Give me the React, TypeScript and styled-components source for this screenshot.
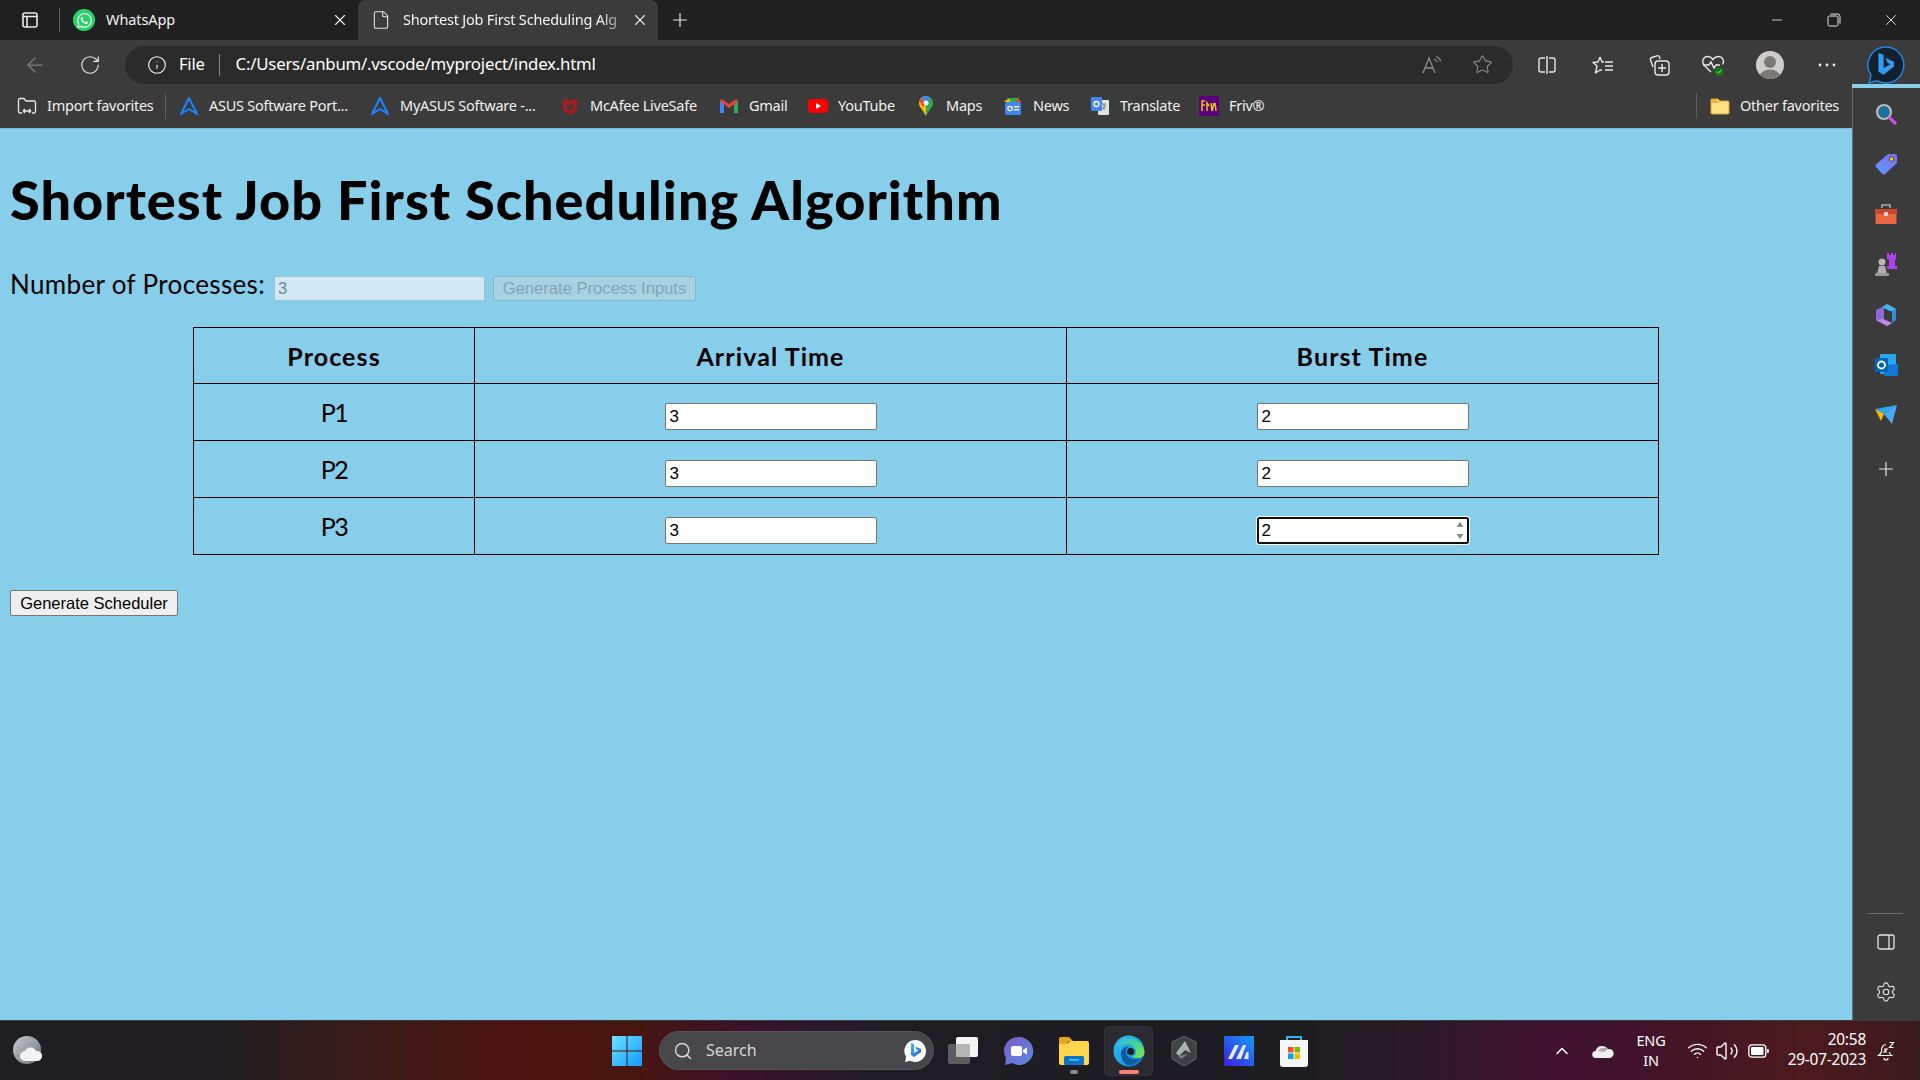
import React from "react";
import styled, { createGlobalStyle } from "styled-components";
import { ArrowLeft, RotateCw, Info, Star, Plus, X, Minus, File, Search, Settings, ChevronUp, Wifi, Volume2 } from "lucide-react";
import { FaWhatsapp } from "react-icons/fa";

const Global = createGlobalStyle`
  html, body { margin: 0; padding: 0; background: #87ceeb; }
  body { font-family: "Noto Sans", sans-serif; }
`;

const Screen = styled.div`
  width: 1920px; height: 1080px; display: flex; flex-direction: column; overflow: hidden;
`;

const TitleBar = styled.div`
  height: 40px; flex: none; background: #202020; display: flex; align-items: center; color: #fff; font-size: 14px;
`;
const IconSlot = styled.span<{ $w?: number; $ml?: number; $c?: string }>`
  flex: none; display: flex; align-items: center; justify-content: center;
  width: ${(p) => p.$w ?? 40}px; margin-left: ${(p) => p.$ml ?? 0}px; color: ${(p) => p.$c ?? "#e8e8e8"};
`;
const TabDivider = styled.span`
  width: 1px; height: 24px; background: #5c5c5c; flex: none;
`;
const Tab = styled.div<{ $active?: boolean; $w: number }>`
  width: ${(p) => p.$w}px; height: 40px; flex: none; display: flex; align-items: center; box-sizing: border-box;
  background: ${(p) => (p.$active ? "#3b3b3b" : "transparent")};
  border-radius: 8px 8px 0 0;
`;
const TabLabel = styled.span<{ $fade?: boolean; $ml?: number }>`
  flex: 1; white-space: nowrap; font-size: 14.5px; letter-spacing: ${(p) => (p.$fade ? -0.2 : -0.1)}px; color: #f4f4f4; padding-bottom: 2px;
  margin-left: ${(p) => p.$ml ?? 0}px;
  ${(p) => p.$fade && "-webkit-mask-image: linear-gradient(90deg, #000 90%, rgba(0,0,0,.35) 100%);"}
`;
const FaviconCircle = styled.span`
  width: 22px; height: 22px; border-radius: 50%; background: #25d366; color: #fff;
  display: flex; align-items: center; justify-content: center; flex: none;
`;
const WindowControls = styled.div`
  margin-left: auto; display: flex; padding-right: 1px;
`;

const Toolbar = styled.div`
  height: 44px; flex: none; background: #3b3b3b; display: flex; align-items: center; padding: 5px 0 0 7px; box-sizing: border-box;
`;
const Address = styled.div`
  width: 1388px; height: 38px; margin: 0 0 0 8px; flex: none; border-radius: 19px; background: #2b2b2b;
  display: flex; align-items: center; color: #fff; padding-left: 22px; box-sizing: border-box;
`;
const AddrSep = styled.span`
  width: 1px; height: 22px; background: #8a8a8a; margin: 0 16px 0 14px;
`;
const UrlText = styled.span`
  letter-spacing: -0.22px; font-size: 16.8px; padding-bottom: 2px;
`;
const FileText = styled.span`
  font-size: 16.5px; margin-left: 12px; letter-spacing: -0.2px; padding-bottom: 2px;
`;
const AddrEnd = styled.div`
  margin-left: auto; display: flex; align-items: center; padding-right: 6px;
`;
const Avatar = styled.span`
  width: 28px; height: 28px; border-radius: 50%; background: #cfcdca; overflow: hidden; display: block;
`;

const Body = styled.div`
  flex: 1; min-height: 0; display: flex;
`;
const Left = styled.div`
  flex: 1; min-width: 0; display: flex; flex-direction: column;
`;
const Bookmarks = styled.div`
  height: 45px; flex: none; box-sizing: border-box; background: #3b3b3b; display: flex; align-items: center;
  padding-left: 17px; color: #f0f0f0; border-bottom: 1px solid #7fb9d3; font-size: 14.5px;
`;
const Bookmark = styled.div<{ $lw: number; $ml?: number }>`
  display: flex; align-items: center; flex: none; margin-left: ${(p) => p.$ml ?? 21}px;
  span.t { width: ${(p) => p.$lw - 1}px; margin-left: 10px; white-space: nowrap; letter-spacing: -0.25px; padding-bottom: 2px; }
`;
const BmIcon = styled.span`
  width: 20px; height: 20px; display: flex; align-items: center; justify-content: center; flex: none;
`;
const BmDivider = styled.span<{ $ml?: string }>`
  width: 1px; height: 26px; background: #5e5e5e; flex: none; margin-left: ${(p) => p.$ml ?? "13px"};
`;
const BmRight = styled.div`
  margin-left: auto; display: flex; align-items: center; padding-right: 15px;
`;

const Page = styled.main`
  flex: 1; min-height: 0; background: #87ceeb; padding: 0 10px; box-sizing: border-box; color: #000;
`;
const Heading = styled.h1`
  font-family: "Lato", sans-serif;
  margin: 39px 0 0; font-size: 54px; line-height: 64px; font-weight: 900; letter-spacing: 1.03px; white-space: nowrap;
`;
const ProcessRow = styled.div`
  display: flex; align-items: center; height: 27px; margin-top: 43px;
`;
const CountLabel = styled.label`
  font-family: "Lato", sans-serif;
  font-size: 26px; width: 264px; white-space: nowrap; letter-spacing: 0.35px; position: relative; top: -5px; flex: none;
`;
const CountInput = styled.input`
  width: 211px; height: 25px; box-sizing: border-box; border: 1px solid #9fbfcd; border-radius: 2px; background: #d2e9f3;
  color: #6f8c98; font: 16.6px "Liberation Sans", sans-serif; padding: 0 3px; margin: 0 8px 0 0;
`;
const GhostButton = styled.button`
  width: 203px; height: 25px; box-sizing: border-box; border: 1px solid #8ab5c7; border-radius: 2px; background: #a7d2e3;
  color: #84a6b4; font: 16.6px "Liberation Sans", sans-serif; padding: 0; white-space: nowrap;
`;
const Table = styled.table`
  width: 1465px; margin: 25px auto 0; border-collapse: collapse; table-layout: fixed;
  font-family: "Lato", sans-serif;
  th, td { border: 1px solid #000; padding: 0; text-align: center; height: 56px; }
  th { font-size: 25px; font-weight: 700; letter-spacing: 1.1px; padding-top: 1px; box-sizing: border-box; }
  td { font-size: 25px; letter-spacing: -1.4px; }
`;
const Col = styled.col<{ $w: number }>`
  width: ${(p) => p.$w}px;
`;
const InputCell = styled.div`
  display: flex; justify-content: center; padding-top: 9px; letter-spacing: 0;
`;
const NumberBox = styled.div`
  position: relative; width: 212px; height: 27px;
`;
const TimeInput = styled.input<{ $focus?: boolean }>`
  display: block; width: 212px; height: 27px; box-sizing: border-box; margin: 0;
  background: #fff; color: #000; font: 17px "Liberation Sans", sans-serif; padding: 0 4px; border-radius: 2px;
  border: ${(p) => (p.$focus ? "2px solid #101010" : "1px solid #767676")};
  padding-left: ${(p) => (p.$focus ? "3px" : "4px")};
  outline: ${(p) => (p.$focus ? "1px solid #fff" : "none")};
`;
const Spinner = styled.svg`
  position: absolute; right: 5px; top: 4px;
`;
const Submit = styled.button`
  display: block; margin: 35px 0 0; width: 168px; height: 26px; box-sizing: border-box; border: 1px solid #767676; border-radius: 2px;
  background: #efefef; color: #000; font: 16.5px "Liberation Sans", sans-serif; padding: 0; white-space: nowrap;
`;

const Sidebar = styled.aside`
  width: 68px; flex: none; background: #3b3b3b; display: flex; flex-direction: column; align-items: center;
  box-sizing: border-box; border-left: 1px solid #6b6b6b; margin-top: 4px; padding: 1px 2px 0 0;
`;
const SideIcon = styled.span<{ $c?: string; $mt?: number }>`
  height: 50.2px; flex: none; display: flex; align-items: center; justify-content: center; width: 100%;
  color: ${(p) => p.$c ?? "inherit"}; margin-top: ${(p) => p.$mt ?? 0}px;
`;
const SideRule = styled.span`
  width: 35px; height: 1px; background: #6e6e6e; margin-top: auto; margin-bottom: 3px;
`;
const SideBottomIcon = styled.span`
  height: 50px; flex: none; display: flex; align-items: center; justify-content: center; color: #e4e4e4;
  &:last-child { margin-bottom: 3px; }
`;

const Taskbar = styled.footer`
  height: 60px; flex: none; display: flex; align-items: center; box-sizing: border-box; padding: 0 14px 0 13px;
  border-top: 1px solid #3a3a3e; color: #fff;
  background: linear-gradient(90deg, #1f1e23 0%, #201e22 11%, #3d1b18 20%, #4c1412 26%, #48150f 33%, #3d1228 38%, #1f1c24 46%, #1d1c21 68%, #2c1a26 74%, #411230 81%, #41122a 85%, #4d1a1c 94%, #3a1a1e 100%);
`;
const StartSlot = styled.span`
  margin-left: 569px; width: 30px; height: 30px; flex: none; display: block;
`;
const SearchPill = styled.div`
  width: 275px; height: 39px; margin: 0 2px 0 17px; flex: none; border-radius: 20px; background: #47464b;
  border: 1px solid #56555a; box-sizing: border-box; display: flex; align-items: center; padding-left: 13px; font-size: 16px; color: #d6d6d6;
`;
const PillText = styled.span`
  margin-left: 13px; flex: 1; padding-bottom: 1px;
`;
const TaskSlot = styled.span<{ $active?: boolean }>`
  width: ${(p) => (p.$active ? 49 : 55)}px; height: 50px; margin: 0 ${(p) => (p.$active ? 3 : 0)}px; flex: none; position: relative;
  display: flex; align-items: center; justify-content: center; border-radius: 5px; box-sizing: border-box;
  ${(p) => p.$active && "background: #2b2a30; border: 1px solid #34333a;"}
`;
const RunningDot = styled.span<{ $active?: boolean }>`
  position: absolute; bottom: ${(p) => (p.$active ? 1 : 2)}px; left: 50%; transform: translateX(-50%);
  width: ${(p) => (p.$active ? 20 : 8)}px; height: 4px; border-radius: 2px;
  background: ${(p) => (p.$active ? "#f98370" : "#8b8b8b")};
`;
const Tray = styled.div`
  margin-left: auto; display: flex; align-items: center;
`;
const TraySlot = styled.span<{ $w: number }>`
  width: ${(p) => p.$w}px; flex: none; display: flex; align-items: center; justify-content: center;
  svg { flex: none; }
`;
const LangText = styled.span`
  width: 48px; text-align: center; font-size: 14.5px; line-height: 20px; flex: none; letter-spacing: -0.2px; padding-bottom: 2px;
`;
const Clock = styled.span`
  width: 85px; flex: none; text-align: right; font-size: 15.4px; line-height: 20px; white-space: nowrap; letter-spacing: -0.2px; padding-bottom: 2px;
`;

const s = { strokeWidth: 1.25 };

const PanelIcon = () => (
  <svg width="18" height="18" viewBox="0 0 18 18" fill="none" stroke="currentColor" strokeWidth="1.6">
    <rect x="2" y="2" width="14" height="14" rx="2" /><path d="M2 5.5h14M6 5.5V16" />
  </svg>
);
const RestoreIcon = () => (
  <svg width="14" height="14" viewBox="0 0 14 14" fill="none" stroke="currentColor" strokeWidth="1">
    <rect x="1" y="3" width="10" height="10" rx="1.5" /><path d="M3.5 1h7a2.5 2.5 0 0 1 2.5 2.5v7" />
  </svg>
);
const ReadIcon = () => (
  <svg width="22" height="20" viewBox="0 0 22 20" fill="none" stroke="#8c8c8c" strokeWidth="1.3">
    <path d="M2 18 8 3l6 15M4.5 13h7" /><path d="M13 4c1.5.5 2.5 1.5 3 3M15 1.5c2.5.8 4 2.500 4.800 5" />
  </svg>
);
const SplitIcon = () => (
  <svg width="20" height="20" viewBox="0 0 20 20" fill="none" stroke="#e8e8e8" strokeWidth="1.4">
    <path d="M8 3H4a2 2 0 0 0-2 2v10a2 2 0 0 0 2 2h4M12 3h4a2 2 0 0 1 2 2v10a2 2 0 0 1-2 2h-4M10 1v18" />
  </svg>
);
const FavsIcon = () => (
  <svg width="22" height="20" viewBox="0 0 22 20" fill="none" stroke="#e8e8e8" strokeWidth="1.4" strokeLinejoin="round">
    <path d="M8 2l2 5h2M8 2 6 7 1 7.500l4 3.500-1.500 7L8 15h2" /><path d="M13 7h8M13 11h8M13 15h8" />
  </svg>
);
const CollectionsIcon = () => (
  <svg width="22" height="22" viewBox="0 0 22 22" fill="none" stroke="#e8e8e8" strokeWidth="1.4">
    <path d="M5 13 2.500 6a2 2 0 0 1 1.300-2.500L9 1.800a2 2 0 0 1 2.500 1.200L12 5" />
    <rect x="7" y="7" width="14" height="14" rx="3" /><path d="M14 10v8M10 14h8" />
  </svg>
);
const HealthIcon = () => (
  <svg width="24" height="24" viewBox="0 0 24 24" fill="none">
    <path d="M10 19 3 12c-3-4 0-9 4-8.500 2.500.2 4 1.500 5 3 1-1.500 2.500-2.800 5-3 4-.5 7 4 4.500 8" stroke="#e8e8e8" strokeWidth="1.4" />
    <path d="M2 12h6l2-3 3 6 2-3h4" stroke="#e8e8e8" strokeWidth="1.4" />
    <circle cx="18" cy="18.500" r="4.500" fill="#107c10" /><path d="M16 18.500l1.500 1.500 2.500-3" stroke="#9fd49f" strokeWidth="1" />
  </svg>
);
const AvatarFace = () => (
  <svg width="28" height="28" viewBox="0 0 28 28">
    <circle cx="14" cy="11" r="6" fill="#7b7976" /><ellipse cx="14" cy="25" rx="10" ry="6.500" fill="#7b7976" />
  </svg>
);
const Dots = () => (
  <svg width="18" height="4" viewBox="0 0 18 4" fill="#e8e8e8"><circle cx="2" cy="2" r="1.400" /><circle cx="9" cy="2" r="1.400" /><circle cx="16" cy="2" r="1.400" /></svg>
);
const BingB = ({ size = 24 }: { size?: number }) => (
  <svg width={size} height={size} viewBox="0 0 24 24">
    <defs><linearGradient id="bb" x1="0" y1="0" x2="1" y2="1"><stop offset="0" stopColor="#37bdff" /><stop offset=".5" stopColor="#2a8cf0" /><stop offset="1" stopColor="#1b5fd8" /></linearGradient></defs>
    <path d="M12 1a11 11 0 1 1-5 20.800L2 23l1.200-5A11 11 0 0 1 12 1z" fill="#fff" />
    <path d="M8 4l3 1v9l4.500-2.500-2-1-1.200-3L18 10v3l-7 5-3-2z" fill="url(#bb)" />
  </svg>
);
const BingBubble = () => (
  <svg width="40" height="40" viewBox="0 0 40 40" fill="none">
    <path d="M20 2a18 18 0 1 1-9 33.700L3 38l2-8A18 18 0 0 1 20 2z" fill="#14202e" stroke="#1e88e5" strokeWidth="1.500" />
    <g transform="translate(9 8) scale(1.150)">
      <path d="M3 0l4.500 1.500v11.500l6-3.300-2.700-1.300-1.600-4L16.500 7.500v4.300L7.500 19 3 16.200z" fill="#2f9ff5" />
    </g>
  </svg>
);
const ImportIcon = () => (
  <svg width="20" height="20" viewBox="0 0 20 20" fill="none" stroke="#e8e8e8" strokeWidth="1.3">
    <path d="M5 17H3a1.500 1.500 0 0 1-1.500-1.500V4A1.500 1.500 0 0 1 3 2.500h4L9 5h8a1.500 1.500 0 0 1 1.500 1.500v9A1.500 1.500 0 0 1 17 17h-2" /><path d="M6 15h8M6 15l2-2M6 15l2 2M14 15l-2-2M14 15l-2 2" />
  </svg>
);
const AsusIcon = () => (
  <svg width="20" height="20" viewBox="0 0 20 20" fill="none" stroke="#1a85ff" strokeWidth="2" strokeLinejoin="round">
    <path d="M10 2 2 18l8-5 8 5z" />
  </svg>
);
const McAfee = () => (
  <svg width="20" height="20" viewBox="0 0 20 20"><path d="M3 2l7 3 7-3v10c0 3-4 5.500-7 7-3-1.500-7-4-7-7z" fill="#a31d22" /><path d="M7 7.500l3 2 3-2v5l-3 2-3-2z" fill="#3b3b3b" /></svg>
);
const Gmail = () => (
  <svg width="20" height="18" viewBox="0 0 20 18">
    <path d="M1 4v12h4V7z" fill="#4285f4" /><path d="M15 7v9h4V4z" fill="#34a853" />
    <path d="M1 4l9 7 9-7-1.500-2L10 7 2.500 2z" fill="#ea4335" />
  </svg>
);
const YouTube = () => (
  <svg width="20" height="16" viewBox="0 0 20 16"><rect x="0" y="1" width="20" height="14" rx="4" fill="#f00" /><path d="M8 5l5 3-5 3z" fill="#fff" /></svg>
);
const Maps = () => (
  <svg width="16" height="20" viewBox="0 0 16 20">
    <path d="M8 0a7 7 0 0 0-7 7c0 4 4 7 7 13z" fill="#fbbc04" /><path d="M8 0a7 7 0 0 1 7 7c0 4-4 7-7 13z" fill="#34a853" />
    <path d="M3 2a7 7 0 0 1 9-.5L8 7z" fill="#4285f4" /><path d="M1.500 5 3 2l5 5-3 4z" fill="#ea4335" /><circle cx="8" cy="7" r="2.500" fill="#fff" />
  </svg>
);
const News = () => (
  <svg width="20" height="20" viewBox="0 0 20 20">
    <path d="M4 2h12v5H4z" fill="#34a853" /><path d="M1 5l6-2v6z" fill="#fbbc04" /><path d="M19 5l-6-2v6z" fill="#ea4335" />
    <rect x="2" y="6" width="16" height="13" rx="1.500" fill="#4285f4" /><rect x="11" y="10" width="5" height="1.400" fill="#fff" /><rect x="11" y="13" width="5" height="1.400" fill="#fff" />
    <circle cx="7" cy="12.500" r="2.200" fill="none" stroke="#fff" strokeWidth="1.200" />
  </svg>
);
const Translate = () => (
  <svg width="20" height="20" viewBox="0 0 20 20">
    <rect x="8" y="4" width="11" height="15" rx="1" fill="#dfe3e8" /><path d="M12 8h4M14 8v6M12 13l4-3" stroke="#777" strokeWidth="1" fill="none" />
    <rect x="1" y="1" width="11" height="14" rx="1" fill="#4285f4" /><circle cx="6.500" cy="8" r="2.500" fill="none" stroke="#fff" strokeWidth="1.300" />
  </svg>
);
const Friv = () => (
  <svg width="20" height="20" viewBox="0 0 20 20">
    <rect width="20" height="20" fill="#5a007a" />
    <path d="M3 15V5h3M3 9h3M8 15V7l2 3M12 7l1 8 2-8M16 7l1 8" stroke="#e8c810" strokeWidth="1.500" fill="none" />
  </svg>
);
const FolderIcon = () => (
  <svg width="20" height="18" viewBox="0 0 20 18">
    <path d="M1 3a1 1 0 0 1 1-1h6l2 2h8a1 1 0 0 1 1 1v11a1 1 0 0 1-1 1H2a1 1 0 0 1-1-1z" fill="#ffdf80" stroke="#d8a530" strokeWidth="1" />
    <path d="M1 6h7l2-2H8L7 2H2a1 1 0 0 0-1 1z" fill="#eeb83e" />
  </svg>
);

const SideSearch = () => (
  <svg width="24" height="24" viewBox="0 0 24 24" fill="none">
    <circle cx="10" cy="10" r="7" fill="#1f6f9f" stroke="#b8b8b8" strokeWidth="2.200" />
    <path d="M16 16l5 5" stroke="#c94fe0" strokeWidth="3.400" strokeLinecap="round" />
  </svg>
);
const SideTag = () => (
  <svg width="24" height="24" viewBox="0 0 24 24">
    <defs><linearGradient id="tg" x1="0" y1="1" x2="1" y2="0"><stop offset="0" stopColor="#5f9bff" /><stop offset="1" stopColor="#7a6cf0" /></linearGradient></defs>
    <path d="M14 2h7a2 2 0 0 1 2 2v7L11 22a2 2 0 0 1-2.500 0L2 15a2 2 0 0 1 0-2.500z" fill="url(#tg)" />
    <circle cx="17.500" cy="7" r="2.200" fill="#ffd400" stroke="#333" strokeWidth=".8" />
  </svg>
);
const SideBox = () => (
  <svg width="24" height="24" viewBox="0 0 24 24">
    <path d="M8 6V3h8v3" fill="none" stroke="#aaa" strokeWidth="1.600" />
    <path d="M1 7h22v5H1z" fill="#c9472c" /><path d="M1.500 12h21v9a1 1 0 0 1-1 1h-19a1 1 0 0 1-1-1z" fill="#e9673f" />
    <rect x="10" y="10" width="4" height="4" rx="1" fill="#d8d8d8" />
  </svg>
);
const SideChess = () => (
  <svg width="24" height="24" viewBox="0 0 24 24">
    <path d="M14 1h2v2h2V1h2v2h2V1h1v6l-1 1v6h2v3h-10v-3h2V8l-2-1z" fill="#b040f0" transform="translate(-1 -1)" />
    <circle cx="8" cy="9" r="3.500" fill="#b8b8b8" /><path d="M5 13h6l2 8H3z" fill="#b0b0b0" /><rect x="1" y="20" width="14" height="3" rx="1" fill="#9a9a9a" />
  </svg>
);
const Copilot = () => (
  <svg width="24" height="24" viewBox="0 0 24 24">
    <path d="M13 1 22 6v11l-4 3V9L8 4z" fill="#2f8fd8" />
    <path d="M8 4l5-3 9 5-6 2z" fill="#45b4ea" />
    <path d="M2 7l6-3 2 1v11l8 4-5 3-11-6z" fill="#8a68dc" />
    <path d="M2 17l6-1 10 4-5 3z" fill="#c08ae0" />
    <path d="M10 8l6 0 2 1v7l-8 0z" fill="#3b3b3b" />
  </svg>
);
const Outlook = () => (
  <svg width="24" height="24" viewBox="0 0 24 24">
    <rect x="6" y="1" width="16" height="20" rx="1" fill="#28a8ea" /><path d="M10 12l14-1v11a1 1 0 0 1-1 1H10z" fill="#0f78d4" />
    <rect x="1" y="5" width="13" height="14" rx="1.500" fill="#0364b8" /><circle cx="7.500" cy="12" r="3.500" fill="none" stroke="#fff" strokeWidth="1.800" />
  </svg>
);
const SideSend = () => (
  <svg width="24" height="20" viewBox="0 0 24 20">
    <path d="M1 4 23 0 10 9z" fill="#2ea8f0" /><path d="M1 4l9 5-3 7z" fill="#ffb900" /><path d="M10 9 23 0l-5 19z" fill="#4aa8f5" />
  </svg>
);
const SidePanel = () => (
  <svg width="18" height="18" viewBox="0 0 18 18" fill="none" stroke="currentColor" strokeWidth="1.300">
    <rect x="1" y="2" width="16" height="14" rx="2" /><path d="M12 2v14" />
  </svg>
);

const Weather = () => (
  <svg width="30" height="30" viewBox="0 0 30 30">
    <defs><linearGradient id="wg" x1="0" y1="0" x2="1" y2="1"><stop offset="0" stopColor="#c8ccd0" /><stop offset="1" stopColor="#6c7278" /></linearGradient></defs>
    <circle cx="14" cy="14" r="14" fill="url(#wg)" /><path d="M12 25a5 5 0 0 1 0-10 6 6 0 0 1 11 0 5 5 0 0 1 2 10z" fill="#f4f4f4" />
  </svg>
);
const WinLogo = () => (
  <svg width="30" height="30" viewBox="0 0 30 30">
    <defs><linearGradient id="wl" x1="0" y1="0" x2="1" y2="1"><stop offset="0" stopColor="#6ee0ff" /><stop offset="1" stopColor="#0f9bff" /></linearGradient></defs>
    <path d="M0 0h14.500v14.500H0zM15.500 0H30v14.500H15.500zM0 15.500h14.500V30H0zM15.500 15.500H30V30H15.500z" fill="url(#wl)" />
  </svg>
);
const TaskView = () => (
  <svg width="32" height="30" viewBox="0 0 32 30">
    <rect x="0" y="8" width="22" height="20" rx="2" fill="#5d5d5d" /><rect x="8" y="1" width="22" height="20" rx="2" fill="#f4f4f4" />
    <rect x="8" y="8" width="14" height="13" rx="1" fill="#b5b5b5" />
  </svg>
);
const Chat = () => (
  <svg width="30" height="30" viewBox="0 0 30 30">
    <defs><linearGradient id="ch" x1="0" y1="0" x2="1" y2="1"><stop offset="0" stopColor="#7b5cc8" /><stop offset="1" stopColor="#5a8ae0" /></linearGradient></defs>
    <path d="M15 1a14 14 0 1 1-7 26l-7 2 1-7A14 14 0 0 1 15 1z" fill="url(#ch)" />
    <rect x="7" y="10" width="11" height="10" rx="2" fill="#fff" /><path d="M19 14l4-2.500v7L19 16z" fill="#fff" />
  </svg>
);
const Explorer = () => (
  <svg width="30" height="28" viewBox="0 0 30 28">
    <path d="M0 2a2 2 0 0 1 2-2h8l4 4h-4L8 7H0z" fill="#e6a820" /><path d="M0 7h8l3-3h17a2 2 0 0 1 2 2v20a2 2 0 0 1-2 2H2a2 2 0 0 1-2-2z" fill="#ffd54a" />
    <rect x="5" y="19" width="20" height="9" rx="1.500" fill="#0c74c8" /><rect x="10" y="22" width="10" height="1.500" fill="#5fc0ff" />
  </svg>
);
const Edge = () => (
  <svg width="32" height="32" viewBox="0 0 32 32">
    <defs>
      <linearGradient id="e1" x1="0" y1="0" x2="1" y2="1"><stop offset="0" stopColor="#35c1f1" /><stop offset=".6" stopColor="#1b9de2" /><stop offset="1" stopColor="#0c59a4" /></linearGradient>
      <linearGradient id="e2" x1="0" y1="0" x2="1" y2="1"><stop offset="0" stopColor="#30c0e0" /><stop offset=".5" stopColor="#45d58c" /><stop offset="1" stopColor="#86e34d" /></linearGradient>
    </defs>
    <circle cx="16" cy="16" r="15.500" fill="url(#e1)" />
    <path d="M8 6a15 15 0 0 1 23.500 11c0 4-3 6-7 6-3 0-5-1-5.500-2 2 0 4-1 4-4 0-5-5-8-9-8-3 0-6 1-8 3 .5-2 1-4 2-6z" fill="url(#e2)" />
    <path d="M8 18c0-4 4-7 8-6.500-2 1-3 3-3 5 0 5 5 8 10 8 2 0 3-.5 4-1-3 4-6 6.500-11 6.500-4 0-8-5-8-12z" fill="#0c59a4" />
    <path d="M14 17.500c0-2.500 1.500-4.500 3-4.700 3 .2 4.500 2 4.200 4.200 0 1.800-1.400 3-3 3-2.500 0-4.200-1-4.200-2.500z" fill="#1f1e23" />
  </svg>
);
const Hexa = () => (
  <svg width="28" height="30" viewBox="0 0 28 30">
    <path d="M14 0l12 6v17l-12 7-12-7V6z" fill="#3f4245" stroke="#5f6266" strokeWidth="1" />
    <path d="M15 5l6 12-6-3-6 6-3-3z" fill="#aeb1b4" /><path d="M8 20l10-2-7 5z" fill="#7a7d80" />
  </svg>
);
const MailApp = () => (
  <svg width="30" height="30" viewBox="0 0 30 30">
    <defs><linearGradient id="ma" x1="0" y1="1" x2="1" y2="0"><stop offset="0" stopColor="#3c1fe0" /><stop offset="1" stopColor="#139cf5" /></linearGradient></defs>
    <rect width="30" height="30" fill="url(#ma)" />
    <path d="M4 23l7-14h4L8 23zM12 23l7-14h3L17 23zM20 23l2.500-7h2v7z" fill="#e8e8ff" />
  </svg>
);
const Store = () => (
  <svg width="30" height="32" viewBox="0 0 30 32">
    <path d="M8 7V2h14v5" fill="none" stroke="#2cb4e8" strokeWidth="2" />
    <path d="M1 5h28v24a3 3 0 0 1-3 3H4a3 3 0 0 1-3-3z" fill="#f6f6f6" />
    <rect x="9" y="12" width="5.500" height="5.500" fill="#f25022" /><rect x="15.500" y="12" width="5.500" height="5.500" fill="#7fba00" />
    <rect x="9" y="18.500" width="5.500" height="5.500" fill="#00a4ef" /><rect x="15.500" y="18.500" width="5.500" height="5.500" fill="#ffb900" />
  </svg>
);
const OneDrive = () => (
  <svg width="22" height="16" viewBox="0 0 22 16">
    <path d="M4 15a3.500 3.500 0 0 1-.5-7A7 7 0 0 1 16 6a4.500 4.500 0 0 1 2 9z" fill="#f0f0f0" /><path d="M6 8a7 7 0 0 1 10-2l-4 3z" fill="#b9a8b8" />
  </svg>
);
const Battery = () => (
  <svg width="21" height="14" viewBox="0 0 21 14" fill="none">
    <rect x=".8" y=".8" width="17" height="12.400" rx="3" stroke="#fff" strokeWidth="1.300" /><rect x="3" y="3" width="12.500" height="8" rx="1" fill="#fff" /><rect x="19" y="5" width="1.800" height="4" rx=".8" fill="#fff" />
  </svg>
);
const BellZ = () => (
  <svg width="18" height="20" viewBox="0 0 18 20" fill="none" stroke="#fff" strokeWidth="1.200">
    <path d="M9 3.500C5 4 4.500 7 4.500 10c0 2-1 3-3 4.500h13c-1.500-1-2-2-2.300-3.500M7 17a2 2 0 0 0 4 0" />
    <path d="M7 8h3l-3 3h3M12.500 1.500h4l-4 5h4" />
  </svg>
);

const bookmarks = [
  { name: "ASUS Software Port...", w: 141, icon: <AsusIcon />, ml: 13 },
  { name: "MyASUS Software -...", w: 140, icon: <AsusIcon /> },
  { name: "McAfee LiveSafe", w: 109, icon: <McAfee /> },
  { name: "Gmail", w: 39, icon: <Gmail /> },
  { name: "YouTube", w: 58, icon: <YouTube /> },
  { name: "Maps", w: 37, icon: <Maps /> },
  { name: "News", w: 37, icon: <News /> },
  { name: "Translate", w: 59, icon: <Translate /> },
  { name: "Friv®", w: 36, icon: <Friv /> },
];

const rows = ["P1", "P2", "P3"];

export default function App() {
  return (
    <Screen>
      <Global />
      <TitleBar>
        <IconSlot $w={30} $ml={15}><PanelIcon /></IconSlot>
        <IconSlot $w={28}><TabDivider /></IconSlot>
        <Tab $w={285}>
          <FaviconCircle><FaWhatsapp size={17} /></FaviconCircle>
          <TabLabel $ml={11}>WhatsApp</TabLabel>
          <IconSlot $w={36}><X size={18} strokeWidth={1.5} /></IconSlot>
        </Tab>
        <Tab $active $w={300}>
          <IconSlot $w={45}><File size={20} {...s} /></IconSlot>
          <TabLabel $fade>Shortest Job First Scheduling Alg</TabLabel>
          <IconSlot $w={36}><X size={18} strokeWidth={1.5} /></IconSlot>
        </Tab>
        <IconSlot $w={44}><Plus size={22} {...s} /></IconSlot>
        <WindowControls>
          <IconSlot $w={57}><Minus size={16} {...s} /></IconSlot>
          <IconSlot $w={57}><RestoreIcon /></IconSlot>
          <IconSlot $w={57}><X size={18} {...s} /></IconSlot>
        </WindowControls>
      </TitleBar>
      <Toolbar>
        <IconSlot $w={55} $c="#7d7d7d"><ArrowLeft size={24} {...s} /></IconSlot>
        <IconSlot $w={55}><RotateCw size={22} {...s} /></IconSlot>
        <Address>
          <Info size={20} {...s} />
          <FileText>File</FileText>
          <AddrSep />
          <UrlText>C:/Users/anbum/.vscode/myproject/index.html</UrlText>
          <AddrEnd>
            <IconSlot $w={50}><ReadIcon /></IconSlot>
            <IconSlot $w={50} $c="#8c8c8c"><Star size={21} {...s} /></IconSlot>
          </AddrEnd>
        </Address>
        <IconSlot $w={56} $ml={6}><SplitIcon /></IconSlot>
        <IconSlot $w={56}><FavsIcon /></IconSlot>
        <IconSlot $w={55}><CollectionsIcon /></IconSlot>
        <IconSlot $w={54}><HealthIcon /></IconSlot>
        <IconSlot $w={60}><Avatar><AvatarFace /></Avatar></IconSlot>
        <IconSlot $w={54}><Dots /></IconSlot>
        <IconSlot $w={56} $ml={4}><BingBubble /></IconSlot>
      </Toolbar>
      <Body>
        <Left>
          <Bookmarks>
            <Bookmark $lw={106} $ml={0}>
              <BmIcon><ImportIcon /></BmIcon>
              <span className="t">Import favorites</span>
            </Bookmark>
            <BmDivider />
            {bookmarks.map((b) => (
              <Bookmark key={b.name} $lw={b.w} $ml={b.ml}>
                <BmIcon>{b.icon}</BmIcon>
                <span className="t">{b.name}</span>
              </Bookmark>
            ))}
            <BmRight>
              <BmDivider $ml="0" />
              <Bookmark $lw={98} $ml={13}>
                <BmIcon><FolderIcon /></BmIcon>
                <span className="t">Other favorites</span>
              </Bookmark>
            </BmRight>
          </Bookmarks>
          <Page>
            <Heading>Shortest Job First Scheduling Algorithm</Heading>
            <ProcessRow>
              <CountLabel>Number of Processes:</CountLabel>
              <CountInput disabled value="3" readOnly />
              <GhostButton disabled>Generate Process Inputs</GhostButton>
            </ProcessRow>
            <Table>
              <colgroup>
                <Col $w={281} /><Col $w={592} /><Col $w={592} />
              </colgroup>
              <thead>
                <tr><th>Process</th><th>Arrival Time</th><th>Burst Time</th></tr>
              </thead>
              <tbody>
                {rows.map((r, i) => (
                  <tr key={r}>
                    <td>{r}</td>
                    <td><InputCell><NumberBox><TimeInput value="3" readOnly /></NumberBox></InputCell></td>
                    <td>
                      <InputCell>
                        <NumberBox>
                          <TimeInput value="2" readOnly $focus={i === 2} />
                          {i === 2 && (
                            <Spinner width="8" height="19" viewBox="0 0 8 19" fill="#8a8a8a">
                              <path d="M4 1l3.500 5H.5zM4 18 .5 13h7z" />
                            </Spinner>
                          )}
                        </NumberBox>
                      </InputCell>
                    </td>
                  </tr>
                ))}
              </tbody>
            </Table>
            <Submit>Generate Scheduler</Submit>
          </Page>
        </Left>
        <Sidebar>
          <SideIcon><SideSearch /></SideIcon>
          <SideIcon><SideTag /></SideIcon>
          <SideIcon><SideBox /></SideIcon>
          <SideIcon><SideChess /></SideIcon>
          <SideIcon><Copilot /></SideIcon>
          <SideIcon><Outlook /></SideIcon>
          <SideIcon><SideSend /></SideIcon>
          <SideIcon $c="#e8e8e8" $mt={4}><Plus size={22} {...s} /></SideIcon>
          <SideRule />
          <SideBottomIcon><SidePanel /></SideBottomIcon>
          <SideBottomIcon><Settings size={22} {...s} /></SideBottomIcon>
        </Sidebar>
      </Body>
      <Taskbar>
        <Weather />
        <StartSlot><WinLogo /></StartSlot>
        <SearchPill>
          <Search size={20} strokeWidth={1.75} />
          <PillText>Search</PillText>
          <IconSlot $w={36}><BingB size={24} /></IconSlot>
        </SearchPill>
        <TaskSlot><TaskView /></TaskSlot>
        <TaskSlot><Chat /></TaskSlot>
        <TaskSlot><Explorer /><RunningDot /></TaskSlot>
        <TaskSlot $active><Edge /><RunningDot $active /></TaskSlot>
        <TaskSlot><Hexa /></TaskSlot>
        <TaskSlot><MailApp /></TaskSlot>
        <TaskSlot><Store /></TaskSlot>
        <Tray>
          <TraySlot $w={34}><ChevronUp size={20} strokeWidth={1.75} /></TraySlot>
          <TraySlot $w={48}><OneDrive /></TraySlot>
          <LangText>ENG<br />IN</LangText>
          <TraySlot $w={44}><Wifi size={21} strokeWidth={1.6} /></TraySlot>
          <TraySlot $w={16}><Volume2 size={24} strokeWidth={1.4} /></TraySlot>
          <TraySlot $w={46}><Battery /></TraySlot>
          <Clock>20:58<br />29-07-2023</Clock>
          <TraySlot $w={40}><BellZ /></TraySlot>
        </Tray>
      </Taskbar>
    </Screen>
  );
}
